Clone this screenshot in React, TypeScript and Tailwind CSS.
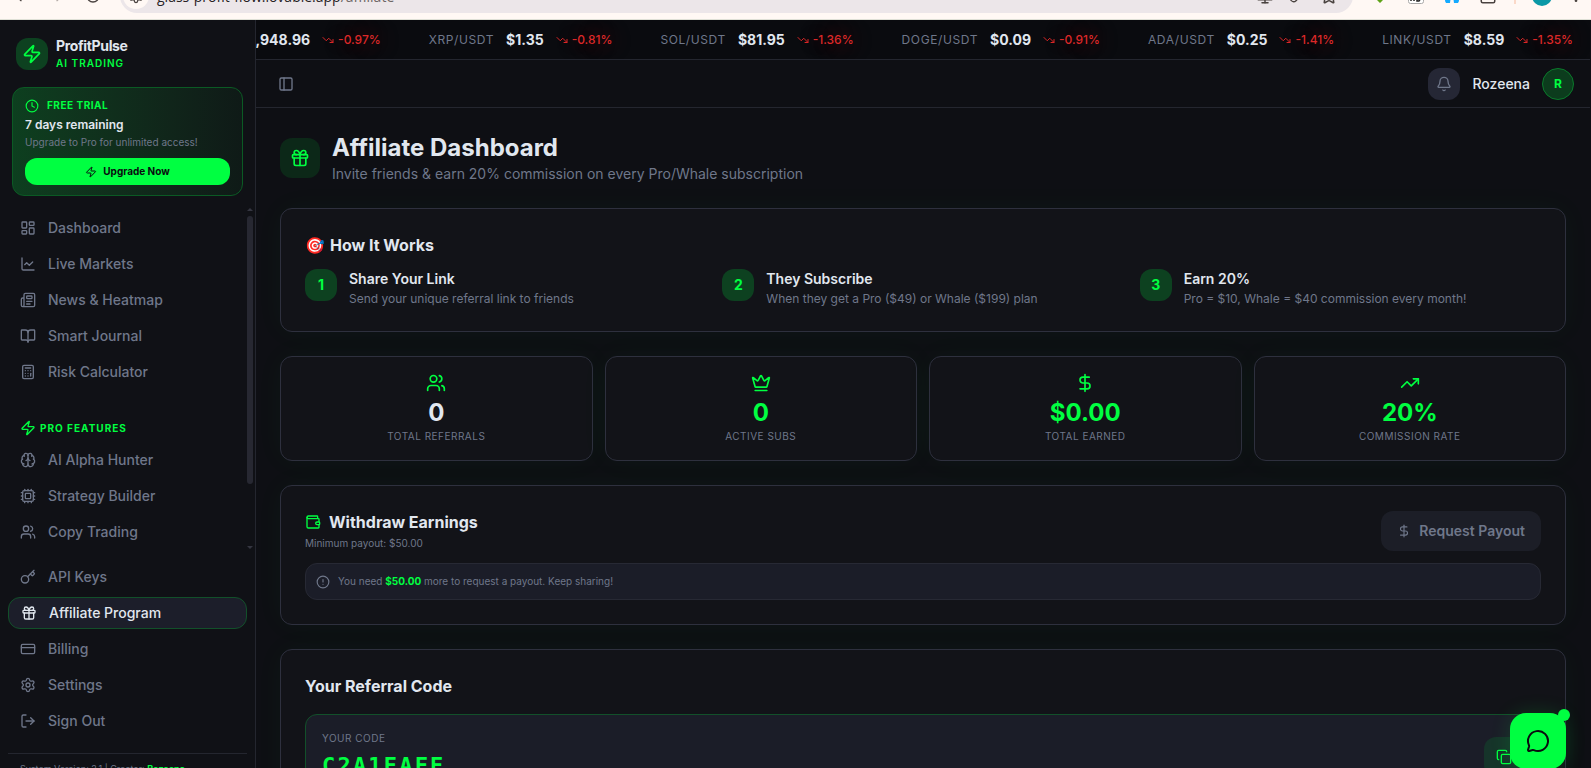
import React from "react";
import {
  Zap, Clock, LayoutDashboard, ChartLine, Newspaper, BookOpen, Calculator, Brain, Cpu, Users, Key, Gift,
  CreditCard, Settings, LogOut, PanelLeft, Bell, TrendingDown, TrendingUp, Crown, DollarSign, Wallet,
  CircleAlert, Copy, MessageCircle, Monitor, Star, EllipsisVertical, ArrowLeft, ArrowRight, RotateCw, Link,
  Square, type LucideIcon,
} from "lucide-react";

type NavItem = { label: string; icon: LucideIcon; active?: boolean };

const mainNav: NavItem[] = [
  { label: "Dashboard", icon: LayoutDashboard },
  { label: "Live Markets", icon: ChartLine },
  { label: "News & Heatmap", icon: Newspaper },
  { label: "Smart Journal", icon: BookOpen },
  { label: "Risk Calculator", icon: Calculator },
];
const proNav: NavItem[] = [
  { label: "AI Alpha Hunter", icon: Brain },
  { label: "Strategy Builder", icon: Cpu },
  { label: "Copy Trading", icon: Users },
];
const accountNav: NavItem[] = [
  { label: "API Keys", icon: Key },
  { label: "Affiliate Program", icon: Gift, active: true },
  { label: "Billing", icon: CreditCard },
  { label: "Settings", icon: Settings },
  { label: "Sign Out", icon: LogOut },
];
const tickers = [
  { pair: "ETH/USDT", price: "$1,948.96", change: "-0.97%" },
  { pair: "XRP/USDT", price: "$1.35", change: "-0.81%" },
  { pair: "SOL/USDT", price: "$81.95", change: "-1.36%" },
  { pair: "DOGE/USDT", price: "$0.09", change: "-0.91%" },
  { pair: "ADA/USDT", price: "$0.25", change: "-1.41%" },
  { pair: "LINK/USDT", price: "$8.59", change: "-1.35%" },
];
const steps = [
  { title: "Share Your Link", text: "Send your unique referral link to friends" },
  { title: "They Subscribe", text: "When they get a Pro ($49) or Whale ($199) plan" },
  { title: "Earn 20%", text: "Pro = $10, Whale = $40 commission every month!" },
];
const stats = [
  { label: "Total Referrals", value: "0", icon: Users, tone: "text-[#e1e7ef]" },
  { label: "Active Subs", value: "0", icon: Crown, tone: "text-[#00ff41]" },
  { label: "Total Earned", value: "$0.00", icon: DollarSign, tone: "text-[#00ff41]" },
  { label: "Commission Rate", value: "20%", icon: TrendingUp, tone: "text-[#00ff41]" },
];

const card = "rounded-xl border border-[#2e303e] bg-[#121318] shadow-[0_0_30px_rgba(0,255,65,0.04)]";

function NavList({ items }: { items: NavItem[] }) {
  return (
    <ul className="flex flex-col gap-1">
      {items.map(({ label, icon: Icon, active }) => (
        <li key={label}>
          <a
            href="#"
            className={
              active
                ? "flex h-8 items-center gap-3 rounded-xl border border-[#12502a] bg-[#1c1e2a] px-3 text-sm font-medium text-[#e1e7ef]"
                : "flex h-8 items-center gap-3 px-3 text-sm font-medium text-[#6f778a]"
            }
          >
            <Icon className="size-4 shrink-0" />
            {label}
          </a>
        </li>
      ))}
    </ul>
  );
}

function BrowserBar() {
  return (
    <div className="h-5 shrink-0 overflow-hidden border-b border-[#dfe0d6] bg-[#fff8f4] text-[#4a4340]">
      <div className="-mt-[21px] flex h-[34px] items-center">
        <div className="flex pl-[3px] *:w-9">
          <button aria-label="Back" className="flex justify-center"><ArrowLeft className="size-4" /></button>
          <button aria-label="Forward" className="flex justify-center text-[#b3aaa6]"><ArrowRight className="size-4" /></button>
          <button aria-label="Reload" className="flex justify-center"><RotateCw className="size-4" /></button>
        </div>
        <div className="ml-[9px] flex h-full min-w-0 flex-1 items-center rounded-full bg-[#ece6e9] pr-2 pl-[3px]">
          <span className="flex size-[26px] shrink-0 items-center justify-center rounded-full bg-[#fff8f4]">
            <Settings className="size-4" />
          </span>
          <p className="ml-2 flex-1 pt-[2px] font-['Open_Sans',sans-serif] text-sm whitespace-nowrap text-[#26211f]">
            glass-profit-flow.lovable.app<span className="text-[#6d6563]">/affiliate</span>
          </p>
          <div className="flex *:w-8">
            <button aria-label="Install app" className="flex justify-center"><Monitor className="size-[18px]" /></button>
            <button aria-label="Copy link" className="flex justify-center"><Link className="size-4" /></button>
            <button aria-label="Bookmark" className="flex justify-center"><Star className="size-[18px]" /></button>
          </div>
        </div>
        <div className="flex w-[238px] shrink-0 items-center pl-[9px]">
          <span className="flex w-9 shrink-0 justify-center">
            <svg viewBox="0 0 16 16" className="size-4"><path d="M6 0h4v9h4l-6 6-6-6h4z" fill="#5fa318" /></svg>
          </span>
          <span className="flex w-9 shrink-0 justify-center">
            <svg viewBox="0 0 16 16" className="size-4"><rect x="0.5" y="0.5" width="15" height="15" rx="2" fill="#fff" stroke="#aaa" /><path d="M3 3v10M6 3v10M3 8h3M9 4v9h2l2-3V6l-2-2z" stroke="#222" strokeWidth="1.5" fill="none" /></svg>
          </span>
          <span className="flex w-9 shrink-0 justify-center">
            <svg viewBox="0 0 16 16" className="size-4"><path d="M2 2l5 6-1 7H2l-1-2zM14 2L9 8l1 7h4l1-2z" fill="#14aaff" /></svg>
          </span>
          <button aria-label="Extensions" className="flex w-9 shrink-0 justify-center"><Square className="size-[18px]" /></button>
          <span className="flex w-[18px] shrink-0 justify-center"><span className="h-4 w-[2px] bg-[#fbd9c8]" /></span>
          <span className="flex w-9 shrink-0 justify-center"><span className="size-5 rounded-full bg-[#0b98a6]" /></span>
          <button aria-label="Browser menu" className="flex w-[31px] shrink-0 justify-center"><EllipsisVertical className="size-4" /></button>
        </div>
      </div>
    </div>
  );
}

function Sidebar() {
  return (
    <aside className="flex w-64 shrink-0 flex-col overflow-hidden border-r border-[#24262f] bg-[#101116]">
      <div className="flex items-center gap-2 p-4">
        <div className="flex size-8 items-center justify-center rounded-xl bg-[#0d4120] text-[#00ff41]">
          <Zap className="size-5" />
        </div>
        <div>
          <p className="text-sm leading-5 font-bold tracking-tight text-[#e1e7ef]">ProfitPulse</p>
          <p className="text-[10px] leading-[15px] font-semibold tracking-widest text-[#00ff41]">AI TRADING</p>
        </div>
      </div>
      <div className="mx-3 rounded-xl border border-[#0b5a24] bg-linear-to-r from-[#0d3f1f] to-[#0f1a17] px-3 py-[10px]">
        <div className="flex items-center gap-2 text-[10px] leading-[15px] font-bold tracking-wider text-[#00ff41]">
          <Clock className="size-[14px]" />
          FREE TRIAL
        </div>
        <p className="mt-1 text-xs leading-4 font-semibold text-[#e1e7ef]">7 days remaining</p>
        <p className="mt-[2px] text-[10px] leading-[15px] text-[#6f778a]">Upgrade to Pro for unlimited access!</p>
        <button className="mt-2 flex h-[27px] w-full items-center justify-center gap-[6px] rounded-xl bg-[#00ff41] text-[10px] font-bold text-[#0a0b0f]">
          <Zap className="size-3" />
          Upgrade Now
        </button>
      </div>
      <div className="mt-3 flex h-[345px] shrink-0">
        <nav aria-label="Main" className="flex-1 overflow-hidden pt-1 pl-2">
          <NavList items={mainNav} />
          <h2 className="mt-6 flex h-8 items-center gap-1 px-3 text-[10px] font-bold tracking-widest text-[#00ff41]">
            <Zap className="size-4" />
            PRO FEATURES
          </h2>
          <NavList items={proNav} />
        </nav>
        <div className="flex w-[10px] flex-col items-center pb-1" aria-hidden="true">
          <svg viewBox="0 0 6 3" className="h-[3px] w-[6px]"><path d="M0 3L3 0L6 3Z" fill="#353641" /></svg>
          <div className="mt-[5px] h-[268px] w-[6px] rounded-full bg-[#272832]" />
          <div className="flex-1" />
          <svg viewBox="0 0 6 3" className="h-[3px] w-[6px]"><path d="M0 0L3 3L6 0Z" fill="#353641" /></svg>
        </div>
      </div>
      <nav aria-label="Account" className="mt-2 px-2">
        <NavList items={accountNav} />
      </nav>
      <footer className="mx-2 mt-4 border-t border-[#24262f] px-3 pt-2 text-[9px] leading-[14px] whitespace-nowrap text-[#6f778a]">
        System Version: 2.1 | Creator: <span className="font-bold text-[#00ff41]">Rozeena</span>
      </footer>
    </aside>
  );
}

function Ticker() {
  return (
    <div className="flex h-10 shrink-0 items-center justify-end gap-12 overflow-hidden border-b border-[#24262f] bg-[#0a0b0f] pr-[17px] whitespace-nowrap">
      {tickers.map((t) => (
        <div key={t.pair} className="flex shrink-0 items-center gap-3">
          <span className="text-xs tracking-wider text-[#6f778a]">{t.pair}</span>
          <span className="text-sm font-bold text-[#e1e7ef]">{t.price}</span>
          <span className="flex items-center gap-1 text-xs font-medium text-[#dc2828] text-shadow-[0_0_20px_#dc282880]">
            <TrendingDown className="size-3" />
            {t.change}
          </span>
        </div>
      ))}
    </div>
  );
}

function Header() {
  return (
    <header className="flex h-12 shrink-0 items-center justify-between border-b border-[#24262f] bg-[#0e0f14] pr-4 pl-[22px]">
      <button aria-label="Toggle sidebar" className="flex text-[#6f778a]">
        <PanelLeft className="size-4" />
      </button>
      <div className="flex items-center gap-3">
        <button aria-label="Notifications" className="flex size-8 items-center justify-center rounded-xl bg-[#252735] text-[#6f778a]">
          <Bell className="size-4" />
        </button>
        <span className="text-sm font-medium text-[#e1e7ef]">Rozeena</span>
        <span className="flex size-8 items-center justify-center rounded-full border border-[#0a7a2b] bg-[#0c3c1d] text-xs font-bold text-[#00ff41]">R</span>
      </div>
    </header>
  );
}

export default function App() {
  return (
    <div className="flex h-screen flex-col overflow-hidden bg-[#0e0f14] font-['Inter',sans-serif] text-[#e1e7ef]">
      <BrowserBar />
      <div className="flex min-h-0 flex-1 pr-px">
        <Sidebar />
        <div className="flex min-w-0 flex-1 flex-col">
          <Ticker />
          <Header />
          <main className="flex min-h-0 flex-1 flex-col gap-6 overflow-hidden p-6 *:shrink-0">
            <div className="flex items-center gap-3">
              <div className="flex size-10 items-center justify-center rounded-xl bg-[#0c2818] text-[#00ff41]">
                <Gift className="size-5" />
              </div>
              <div>
                <h1 className="text-2xl font-bold">Affiliate Dashboard</h1>
                <p className="text-sm text-[#6f778a]">Invite friends &amp; earn 20% commission on every Pro/Whale subscription</p>
              </div>
            </div>

            <section className={card + " p-6"}>
              <h2 className="flex items-center gap-[5px] text-base leading-6 font-bold">
                <span>🎯</span>
                How It Works
              </h2>
              <ol className="mt-3 grid grid-cols-3 gap-4">
                {steps.map((s, i) => (
                  <li key={s.title} className="flex items-start gap-3">
                    <span className="flex size-8 shrink-0 items-center justify-center rounded-xl bg-[#0d4120] text-sm font-bold text-[#00ff41]">{i + 1}</span>
                    <div>
                      <h3 className="text-sm font-semibold">{s.title}</h3>
                      <p className="mt-[2px] text-xs leading-4 text-[#6f778a]">{s.text}</p>
                    </div>
                  </li>
                ))}
              </ol>
            </section>

            <div className="grid grid-cols-4 gap-3">
              {stats.map(({ label, value, icon: Icon, tone }) => (
                <div key={label} className={card + " flex flex-col items-center p-4"}>
                  <Icon className="size-5 text-[#00ff41]" />
                  <p className={"mt-1 text-2xl leading-8 font-bold " + tone}>{value}</p>
                  <p className="text-[10px] leading-[15px] tracking-wider text-[#6f778a] uppercase">{label}</p>
                </div>
              ))}
            </div>

            <section className={card + " p-6"}>
              <div className="flex items-center justify-between">
                <div>
                  <h2 className="flex items-center gap-2 text-base font-bold">
                    <Wallet className="size-4 text-[#00ff41]" />
                    Withdraw Earnings
                  </h2>
                  <p className="mt-[2px] text-[10px] leading-[15px] text-[#6f778a]">Minimum payout: $50.00</p>
                </div>
                <button disabled className="flex h-10 items-center gap-2 rounded-xl bg-[#1c1e27] px-4 text-sm font-semibold text-[#6f778a]">
                  <DollarSign className="size-[14px]" />
                  Request Payout
                </button>
              </div>
              <div className="mt-3 flex items-center gap-2 rounded-xl border border-[#272934] bg-[#1b1d28] p-[10px] text-[10px] leading-[15px] text-[#6f778a]">
                <CircleAlert className="size-[14px]" />
                <p>You need <strong className="font-bold text-[#00ff41]">$50.00</strong> more to request a payout. Keep sharing!</p>
              </div>
            </section>

            <section className={card + " p-6"}>
              <h2 className="text-base leading-6 font-bold">Your Referral Code</h2>
              <div className="mt-4 flex items-center justify-between rounded-xl border border-[#12502a] bg-[#1b1d28] p-4">
                <div>
                  <p className="text-[10px] leading-[15px] tracking-wider text-[#6f778a]">YOUR CODE</p>
                  <p className="mt-1 font-['DejaVu_Sans_Mono',monospace] text-[22px] leading-8 font-bold tracking-widest text-[#00ff41]">C2A1EAFE</p>
                </div>
                <button aria-label="Copy code" className="flex size-10 items-center justify-center rounded-xl bg-[#16342a] text-[#00ff41]">
                  <Copy className="size-4" />
                </button>
              </div>
            </section>
          </main>
        </div>
      </div>
      <button aria-label="Open chat" className="fixed right-[25px] -bottom-[1px] flex size-14 items-center justify-center rounded-2xl bg-[#00ff41] text-[#0a0b0f] shadow-[0_0_20px_rgba(0,255,65,0.15)]">
        <MessageCircle className="size-6" />
        <span className="absolute -top-1 -right-1 size-3 rounded-full bg-[#00ff41]" />
      </button>
    </div>
  );
}
